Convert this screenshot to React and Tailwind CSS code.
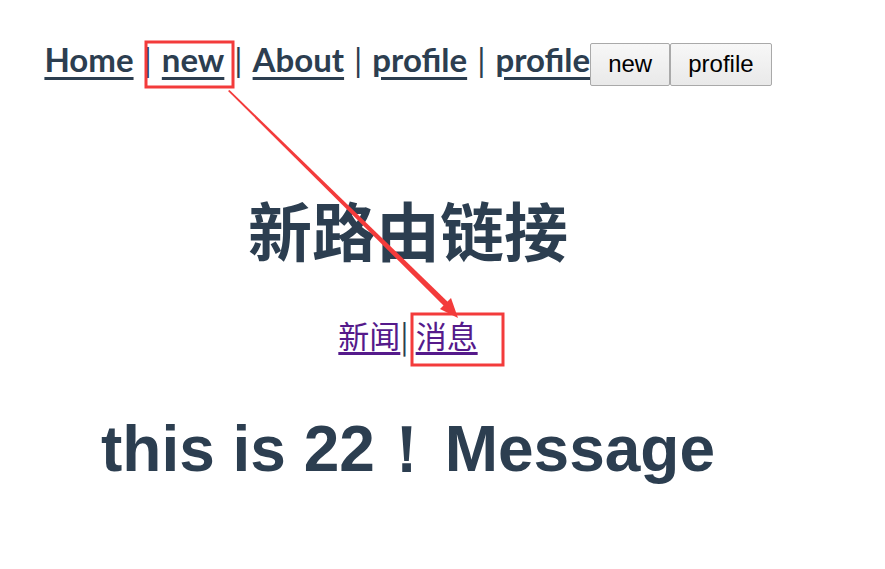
export default function App() {
  const navLink = "underline decoration-[3px] underline-offset-[5px] font-bold text-[#2c3e50]";
  const sep = "inline-block mx-[10px] text-[#2c3e50] font-normal";
  const btn = "h-[43px] px-[17px] text-[24px] leading-none text-black font-['Liberation_Sans',Arial,sans-serif] border border-[#a9a9a9] bg-gradient-to-b from-[#f7f7f7] to-[#e9e9e9] rounded-[2px] align-baseline";
  return (
    <div className="relative w-[885px] h-[569px] bg-white overflow-hidden">
      <div className="w-[816px] text-center text-[#2c3e50] font-['Lato','Noto_Sans_CJK_SC',sans-serif]">
        <nav className="pt-[36px] text-[33px] leading-[46px] whitespace-nowrap">
          <a className={navLink}>Home</a>
          <span className={sep}>|</span>
          <a className={navLink}>new</a>
          <span className={sep}>|</span>
          <a className={navLink}>About</a>
          <span className={sep}>|</span>
          <a className={navLink}>profile</a>
          <span className={sep}>|</span>
          <a className={navLink}>profile</a>
          <button className={btn}>new</button>
          <button className={btn}>profile</button>
        </nav>

        <h2 className="mt-[102px] text-[64px] leading-[80px] font-bold font-['Noto_Sans_CJK_SC',sans-serif] text-[#2c3e50]">
          新路由链接
        </h2>

        <p className="mt-[47px] text-[31px] leading-[40px] font-['Noto_Sans_CJK_SC',sans-serif]">
          <a className="text-[#551a8b] underline underline-offset-[4px]">新闻</a>
          <span className="text-[#2c3e50]">|</span>{" "}
          <a className="text-[#551a8b] underline underline-offset-[4px]">消息</a>
        </p>

        <h1 className="mt-[54px] text-[64px] leading-[80px] font-bold font-['Liberation_Sans',Arial,sans-serif] text-[#2c3e50]">
          this is 22<span className="tracking-[-12px]">！</span> Message
        </h1>
      </div>

      <svg className="absolute inset-0 pointer-events-none" width="885" height="569" viewBox="0 0 885 569">
        <rect x="146" y="42" width="87" height="45" fill="none" stroke="#f33b3b" strokeWidth="3" />
        <rect x="412" y="314" width="91" height="51" fill="none" stroke="#f33b3b" strokeWidth="3" />
        <polygon points="228,91 229.5,90 451,305 447,309" fill="#f33b3b" />
        <polygon points="458,318 440,309 451,298" fill="#f33b3b" />
      </svg>
    </div>
  );
}
